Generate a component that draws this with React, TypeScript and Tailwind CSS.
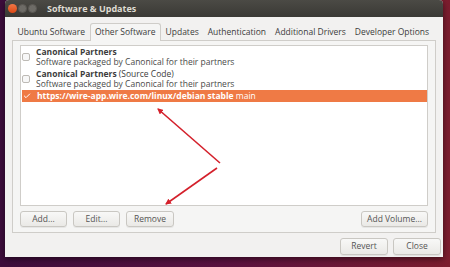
import { Check } from "lucide-react";

const tabs = [
  "Ubuntu Software",
  "Other Software",
  "Updates",
  "Authentication",
  "Additional Drivers",
  "Developer Options",
];

function Btn({ label, className = "" }: { label: string; className?: string }) {
  return (
    <button
      type="button"
      className={`h-[16px] rounded-[3px] border border-[#c9c7c2] bg-[linear-gradient(#f8f8f7,#eae9e6)] text-[8.5px] leading-none text-[#555] shadow-[0_1px_0_rgba(0,0,0,0.06)] ${className}`}
    >
      {label}
    </button>
  );
}

function Source({
  title,
  extra,
  subtitle,
}: {
  title: string;
  extra?: string;
  subtitle: string;
}) {
  return (
    <div className="flex items-center h-[22px]">
      <div className="w-[8px] h-[8px] rounded-[2px] border border-[#bdbab5] bg-[#f7f7f7]" />
      <div className="ml-[6px] flex flex-col leading-[10px]">
        <span className="text-[8.5px] text-[#3c3c3c]">
          <b className="font-bold">{title}</b>
          {extra && <span> {extra}</span>}
        </span>
        <span className="text-[8.5px] text-[#4a4a4a]">{subtitle}</span>
      </div>
    </div>
  );
}

export default function App() {
  return (
    <div
      className="relative w-[450px] h-[267px] overflow-hidden bg-[linear-gradient(90deg,#3d0d3c_0%,#5a1240_50%,#7c1d2e_100%)]"
      style={{ fontFamily: '"Open Sans", "DejaVu Sans", sans-serif' }}
    >
      <div className="ml-[5px] w-[438px] h-[257px] flex flex-col bg-[#f2f1f0] rounded-t-[4px] overflow-hidden shadow-[0_2px_6px_rgba(0,0,0,0.5)]">
        {/* Title bar */}
        <div className="h-[17px] flex items-center bg-[linear-gradient(#4b4a45,#3a3935)] px-[3px]">
          <div className="flex items-center gap-[1px]">
            <span className="w-[9px] h-[9px] rounded-full bg-[linear-gradient(#f07746,#dd4814)]" />
            <span className="w-[9px] h-[9px] rounded-full bg-[#6d6b66] border border-[#5a5853]" />
            <span className="w-[9px] h-[9px] rounded-full bg-[#6d6b66] border border-[#5a5853]" />
          </div>
          <span className="ml-[10px] text-[9px] font-bold text-[#dfdbd2]">
            Software &amp; Updates
          </span>
        </div>

        {/* Tabs */}
        <div className="mt-[6px] ml-[8px] flex items-end h-[18px]">
          {tabs.map((t, i) =>
            i === 1 ? (
              <div
                key={t}
                className="relative z-10 h-[18px] px-[4.5px] flex items-center border border-b-0 border-[#cfcdc9] rounded-t-[3px] bg-[#f5f5f4] text-[8.5px] text-[#3c3c3c]"
              >
                {t}
              </div>
            ) : (
              <div
                key={t}
                className="h-[18px] px-[4.5px] flex items-center text-[8.5px] text-[#3c3c3c]"
              >
                {t}
              </div>
            )
          )}
        </div>

        {/* Notebook */}
        <div className="-mt-px ml-[7px] w-[424px] h-[193px] border border-[#cfcdc9] bg-[#f5f5f4] px-[7px] pt-[4px] flex flex-col">
          <div className="h-[161px] border border-[#cfcdc9] bg-white pl-[1px] flex flex-col">
            <Source
              title="Canonical Partners"
              subtitle="Software packaged by Canonical for their partners"
            />
            <Source
              title="Canonical Partners"
              extra="(Source Code)"
              subtitle="Software packaged by Canonical for their partners"
            />
            <div className="h-[12px] flex items-center bg-[#ef7a45] pl-[1px]">
              <Check className="w-[8px] h-[8px] text-white" strokeWidth={3} />
              <span className="ml-[6px] text-[8.5px] text-white">
                <b className="font-bold">https://wire-app.wire.com/linux/debian stable</b> main
              </span>
            </div>
          </div>
          <div className="mt-[5px] flex items-center">
            <Btn label="Add..." className="w-[47px]" />
            <Btn label="Edit..." className="ml-[6px] w-[47px]" />
            <Btn label="Remove" className="ml-[6px] w-[48px]" />
            <Btn label="Add Volume..." className="ml-auto w-[67px]" />
          </div>
        </div>

        {/* Bottom buttons */}
        <div className="mt-[5px] mr-[2px] flex justify-end gap-[5px]">
          <Btn label="Revert" className="w-[48px] h-[17px]" />
          <Btn label="Close" className="w-[48px] h-[17px]" />
        </div>
      </div>

      {/* Annotation arrows */}
      <svg
        className="absolute inset-0 pointer-events-none"
        width="450"
        height="267"
        viewBox="0 0 450 267"
      >
        <defs>
          <marker
            id="ah"
            markerWidth="6"
            markerHeight="6"
            refX="5"
            refY="3"
            orient="auto"
            markerUnits="userSpaceOnUse"
          >
            <path d="M0,0 L6,3 L0,6 Z" fill="#d4202b" />
          </marker>
        </defs>
        <line x1="220" y1="163" x2="158" y2="109" stroke="#d4202b" strokeWidth="1.6" markerEnd="url(#ah)" />
        <line x1="217" y1="168" x2="166" y2="204" stroke="#d4202b" strokeWidth="1.6" markerEnd="url(#ah)" />
      </svg>
    </div>
  );
}
